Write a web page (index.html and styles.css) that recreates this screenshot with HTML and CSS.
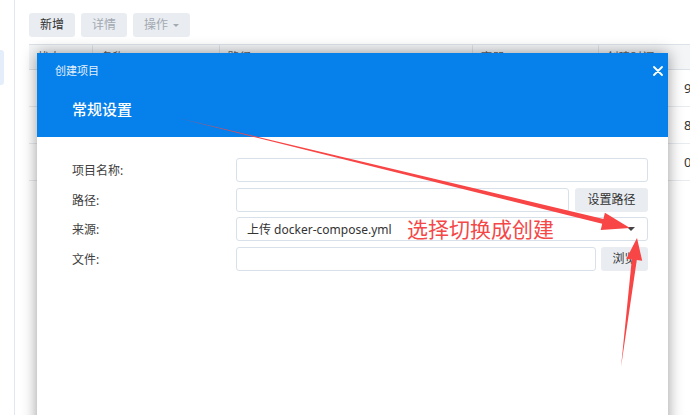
FILE: index.html
```html
<!DOCTYPE html>
<html lang="zh-CN">
<head>
    <meta charset="UTF-8">
    <title>创建项目</title>
    <link rel="stylesheet" href="styles.css">
</head>
<body>
    <div class="app">
        <aside class="sidebar">
            <div class="nav-item active"></div>
        </aside>

        <main class="content">
            <div class="toolbar">
                <button class="btn">新增</button>
                <button class="btn disabled">详情</button>
                <button class="btn disabled">操作 <span class="caret"></span></button>
            </div>

            <table class="list">
                <thead>
                    <tr>
                        <th class="c1">状态</th>
                        <th class="c2">名称</th>
                        <th class="c3">路径</th>
                        <th class="c4">容器</th>
                        <th class="c5">创建时间</th>
                    </tr>
                </thead>
                <tbody>
                    <tr><td></td><td></td><td></td><td></td><td class="time">9</td></tr>
                    <tr><td></td><td></td><td></td><td></td><td class="time">8</td></tr>
                    <tr><td></td><td></td><td></td><td></td><td class="time">0</td></tr>
                </tbody>
            </table>
        </main>
    </div>

    <!-- 对话框 -->
    <div class="modal">
        <div class="modal-head">
            <div class="modal-title-row">
                <span class="modal-title">创建项目</span>
                <svg class="close" width="10" height="10" viewBox="0 0 10 10">
                    <path d="M1 1 L9 9 M9 1 L1 9" stroke="#fff" stroke-width="1.8" stroke-linecap="round"/>
                </svg>
            </div>
            <div class="modal-section">常规设置</div>
        </div>

        <div class="modal-body">
            <div class="form-grid">
                <label>项目名称:</label>
                <div class="field"><input type="text" class="input"></div>

                <label>路径:</label>
                <div class="field">
                    <input type="text" class="input">
                    <button class="btn btn-side wide">设置路径</button>
                </div>

                <label>来源:</label>
                <div class="field">
                    <div class="input select">
                        <span>上传 docker-compose.yml</span>
                        <span class="select-caret"></span>
                    </div>
                </div>

                <label>文件:</label>
                <div class="field">
                    <input type="text" class="input">
                    <button class="btn btn-side">浏览</button>
                </div>
            </div>
        </div>
    </div>

    <!-- 标注 -->
    <svg class="annotation" width="690" height="415" viewBox="0 0 690 415">
        <polygon points="178,118 603.4,219 604.9,212.7 630,228 600.7,230.1 602.2,223.8" fill="#f84545"/>
        <polygon points="621,367 631.8,259.5 626.4,258.8 637,238 642.2,260.8 636.8,260.1" fill="#f84545"/>
    </svg>
    <div class="note">选择切换成创建</div>
</body>
</html>
```

FILE: styles.css
```css
* {
    box-sizing: border-box;
    font-family: "Noto Sans", "Noto Sans CJK SC", sans-serif;
}

body {
    margin: 0;
    background-color: #fff;
    color: #333;
    font-size: 12px;
    overflow: hidden;
    height: 415px;
}

.app {
    display: flex;
    height: 415px;
}

.sidebar {
    width: 15px;
    flex-shrink: 0;
    border-right: 1px solid #e3e7ec;
    padding-top: 50px;
}

.nav-item {
    height: 35px;
    width: 4px;
}

.nav-item.active {
    background-color: #e4eefb;
    border-radius: 0 3px 3px 0;
}

.content {
    flex: 1;
    padding: 13px 0 0 14px;
    overflow: hidden;
}

.toolbar {
    display: flex;
    gap: 6px;
}

.btn {
    height: 24px;
    padding: 0 11px;
    border: none;
    border-radius: 3px;
    background-color: #e9edf2;
    color: #333;
    font-size: 12px;
    line-height: 24px;
    cursor: pointer;
}

.btn.disabled {
    color: #a3a9b1;
}

.caret {
    display: inline-block;
    width: 0;
    height: 0;
    margin-left: 2px;
    vertical-align: middle;
    border-left: 3px solid transparent;
    border-right: 3px solid transparent;
    border-top: 3px solid #a3a9b1;
}

.list {
    margin-top: 7px;
    width: 720px;
    border-collapse: collapse;
    table-layout: fixed;
}

.list th {
    height: 25px;
    background-color: #f3f5f7;
    border-top: 1px solid #dde2e8;
    border-bottom: 1px solid #dde2e8;
    border-left: 1px solid #dde2e8;
    font-weight: normal;
    text-align: left;
    padding: 0 8px;
    color: #666;
}

.list th:first-child {
    border-left: none;
}

.list td {
    height: 37px;
    padding: 0 8px;
    border-bottom: 1px solid #e8ebef;
    white-space: nowrap;
    overflow: hidden;
}

.list td.time {
    padding-left: 86px;
    font-size: 13px;
}

.c1 { width: 63px; }
.c2 { width: 127px; }
.c3 { width: 253px; }
.c4 { width: 126px; }

/* 对话框 */
.modal {
    position: absolute;
    left: 37px;
    top: 53px;
    width: 631px;
    height: 380px;
    background-color: #fff;
    box-shadow: 0 0 14px rgba(0, 0, 0, 0.4);
}

.modal-head {
    background-color: #0680ea;
    color: #fff;
    height: 84px;
}

.modal-title-row {
    display: flex;
    align-items: center;
    justify-content: space-between;
    padding: 11px 5px 0 18px;
    height: 25px;
}

.modal-title {
    font-size: 11px;
    line-height: 14px;
    color: #e4f0fd;
}

.close {
    display: block;
}

.modal-section {
    margin-top: 21px;
    padding-left: 35px;
    font-size: 15px;
    line-height: 20px;
    font-weight: 500;
}

.modal-body {
    padding: 21px 20px 0 35px;
}

.form-grid {
    display: grid;
    grid-template-columns: 164px 1fr;
    row-gap: 5.67px;
    align-items: center;
}

.form-grid label {
    color: #404040;
    font-size: 12px;
}

.field {
    display: flex;
    gap: 5px;
}

.input {
    flex: 1;
    height: 24px;
    border: 1px solid #d8e0e9;
    border-radius: 3px;
    background-color: #fff;
    font-size: 12px;
    padding: 0 10px;
}

.select {
    display: flex;
    align-items: center;
    justify-content: space-between;
    color: #333;
}

.select-caret {
    width: 0;
    height: 0;
    margin-right: 2px;
    border-left: 4px solid transparent;
    border-right: 4px solid transparent;
    border-top: 4px solid #444;
}

.btn-side {
    flex-shrink: 0;
    width: 47px;
    padding: 0;
}

.btn-side.wide {
    width: 73px;
    margin-left: 1px;
}

/* 标注 */
.annotation {
    position: absolute;
    left: 0;
    top: 0;
    pointer-events: none;
}

.note {
    position: absolute;
    left: 407px;
    top: 215px;
    font-size: 21px;
    line-height: 28px;
    color: #f44848;
    pointer-events: none;
}
```
